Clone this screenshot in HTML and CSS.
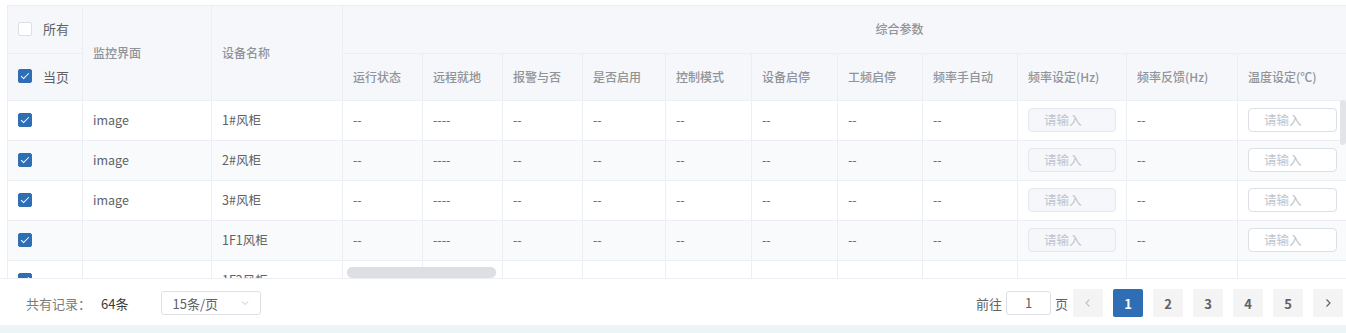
FILE: index.html
```html
<!DOCTYPE html>
<html lang="zh-CN">
<head>
    <meta charset="UTF-8">
    <meta name="viewport" content="width=device-width, initial-scale=1.0">
    <title>设备列表</title>
    <link rel="stylesheet" href="styles.css">
</head>
<body>
    <div class="grid">
        <table class="data">
            <colgroup>
                <col style="width:75px"><col style="width:129px"><col style="width:131px">
                <col style="width:80px"><col style="width:80px"><col style="width:80px">
                <col style="width:83px"><col style="width:86px"><col style="width:86px">
                <col style="width:85px"><col style="width:95px"><col style="width:109px">
                <col style="width:111px"><col style="width:110px"><col style="width:109px">
            </colgroup>
            <thead>
                <tr class="head-top">
                    <th class="sel"><label class="check"><span class="box"></span>所有</label></th>
                    <th rowspan="2">监控界面</th>
                    <th rowspan="2">设备名称</th>
                    <th colspan="12" class="group">综合参数</th>
                </tr>
                <tr class="head-sub">
                    <th class="sel"><label class="check"><span class="box on"></span>当页</label></th>
                    <th>运行状态</th>
                    <th>远程就地</th>
                    <th>报警与否</th>
                    <th>是否启用</th>
                    <th>控制模式</th>
                    <th>设备启停</th>
                    <th>工频启停</th>
                    <th>频率手自动</th>
                    <th>频率设定(Hz)</th>
                    <th>频率反馈(Hz)</th>
                    <th>温度设定(℃)</th>
                    <th></th>
                </tr>
            </thead>
            <tbody>
                <tr>
                    <td class="sel"><span class="box on"></span></td>
                    <td>image</td>
                    <td>1#风柜</td>
                    <td>--</td><td>----</td><td>--</td><td>--</td><td>--</td><td>--</td><td>--</td><td>--</td>
                    <td><span class="field disabled">请输入</span></td>
                    <td>--</td>
                    <td><span class="field">请输入</span></td>
                    <td></td>
                </tr>
                <tr class="stripe">
                    <td class="sel"><span class="box on"></span></td>
                    <td>image</td>
                    <td>2#风柜</td>
                    <td>--</td><td>----</td><td>--</td><td>--</td><td>--</td><td>--</td><td>--</td><td>--</td>
                    <td><span class="field disabled">请输入</span></td>
                    <td>--</td>
                    <td><span class="field">请输入</span></td>
                    <td></td>
                </tr>
                <tr>
                    <td class="sel"><span class="box on"></span></td>
                    <td>image</td>
                    <td>3#风柜</td>
                    <td>--</td><td>----</td><td>--</td><td>--</td><td>--</td><td>--</td><td>--</td><td>--</td>
                    <td><span class="field disabled">请输入</span></td>
                    <td>--</td>
                    <td><span class="field">请输入</span></td>
                    <td></td>
                </tr>
                <tr class="stripe">
                    <td class="sel"><span class="box on"></span></td>
                    <td></td>
                    <td>1F1风柜</td>
                    <td>--</td><td>----</td><td>--</td><td>--</td><td>--</td><td>--</td><td>--</td><td>--</td>
                    <td><span class="field disabled">请输入</span></td>
                    <td>--</td>
                    <td><span class="field">请输入</span></td>
                    <td></td>
                </tr>
                <tr>
                    <td class="sel"><span class="box on"></span></td>
                    <td></td>
                    <td>1F2风柜</td>
                    <td></td><td></td><td></td><td></td><td></td><td></td><td></td><td></td>
                    <td></td><td></td><td></td><td></td>
                </tr>
            </tbody>
        </table>
        <div class="vscroll"></div>
        <div class="hscroll"></div>
    </div>

    <footer class="pager">
        <div class="total">
            <span class="muted">共有记录：</span><span class="count">64条</span>
            <span class="size">15条/页
                <svg class="chev" width="10" height="10" viewBox="0 0 10 10"><path d="M2 3.5 L5 6.5 L8 3.5" fill="none" stroke="#c0c4cc" stroke-width="1"/></svg>
            </span>
        </div>
        <div class="pages">
            <span class="jump">前往 <span class="jump-box">1</span> 页</span>
            <span class="btn nav dim">
                <svg width="10" height="10" viewBox="0 0 10 10"><path d="M6.5 1.5 L3 5 L6.5 8.5" fill="none" stroke="#c0c4cc" stroke-width="1.2"/></svg>
            </span>
            <span class="btn active">1</span>
            <span class="btn">2</span>
            <span class="btn">3</span>
            <span class="btn">4</span>
            <span class="btn">5</span>
            <span class="btn nav">
                <svg width="10" height="10" viewBox="0 0 10 10"><path d="M3.5 1.5 L7 5 L3.5 8.5" fill="none" stroke="#606266" stroke-width="1.2"/></svg>
            </span>
        </div>
    </footer>
    <div class="bottom-bar"></div>
</body>
</html>
```

FILE: styles.css
```css
:root {
    --line: #ebeef5;
    --head: #f5f7fa;
    --text: #606266;
    --muted: #909399;
    --blue: #2f6db5;
}

* {
    margin: 0;
    padding: 0;
    box-sizing: border-box;
}

body {
    background: #ffffff;
    color: var(--text);
    font-family: "Noto Sans CJK SC", "Noto Sans", sans-serif;
    font-size: 12px;
    width: 1346px;
    height: 333px;
    overflow: hidden;
}

.grid {
    position: relative;
    margin: 5px 0 0 7px;
    height: 273px;
    overflow: hidden;
}

.data {
    border-collapse: collapse;
    table-layout: fixed;
    width: 1449px;
}

.data th,
.data td {
    border: 1px solid var(--line);
    padding: 0 10px 2px;
    text-align: left;
    white-space: nowrap;
    overflow: hidden;
}

.data th {
    background: var(--head);
    color: var(--muted);
    font-weight: 500;
    font-size: 12px;
}

.head-top {
    height: 48px;
}

.head-sub {
    height: 47px;
}

.data th.group {
    text-align: center;
}

.data tbody tr {
    height: 40px;
}

.data td {
    font-size: 12.5px;
    color: var(--text);
}

.data tr.stripe td {
    background: #f9fafc;
}

.data td.sel .box {
    display: block;
}

.check {
    display: flex;
    align-items: center;
    gap: 11px;
    color: var(--text);
    font-size: 13px;
    font-weight: 400;
}

.box {
    display: inline-block;
    width: 14px;
    height: 14px;
    border: 1px solid #dcdfe6;
    border-radius: 2px;
    background: #ffffff;
    position: relative;
}

.box.on {
    background: var(--blue);
    border-color: var(--blue);
}

.box.on::after {
    content: '';
    position: absolute;
    left: 4px;
    top: 1px;
    width: 3px;
    height: 7px;
    border: 1px solid #ffffff;
    border-left: 0;
    border-top: 0;
    transform: rotate(45deg);
}

.field {
    display: block;
    height: 24px;
    line-height: 22px;
    border: 1px solid #dcdfe6;
    border-radius: 4px;
    padding-left: 15px;
    color: #c0c4cc;
    background: #ffffff;
    font-size: 12.5px;
}

.field.disabled {
    background: var(--head);
    border-color: #e4e7ed;
}

.vscroll {
    position: absolute;
    right: 0;
    top: 95px;
    width: 6px;
    height: 45px;
    border-radius: 3px;
    background: #e3e4e9;
}

.hscroll {
    position: absolute;
    left: 340px;
    top: 262px;
    width: 149px;
    height: 11px;
    border-radius: 5px;
    background: #dedfe4;
}

.pager {
    height: 47px;
    border-top: 1px solid var(--line);
    display: flex;
    align-items: center;
    justify-content: space-between;
    padding: 2px 3px 0 26px;
    font-size: 13px;
}

.total {
    display: flex;
    align-items: center;
}

.muted {
    color: #7a7c80;
}

.count {
    color: #3a3b3e;
    margin-left: 10px;
}

.size {
    display: flex;
    align-items: center;
    justify-content: space-between;
    width: 100px;
    height: 24px;
    margin-left: 33px;
    padding: 0 10px;
    border: 1px solid #dcdfe6;
    border-radius: 3px;
    color: var(--text);
}

.pages {
    display: flex;
    align-items: center;
    gap: 10px;
}

.jump {
    display: flex;
    align-items: center;
    gap: 4px;
    margin-right: -5px;
}

.jump-box {
    width: 45px;
    height: 24px;
    border: 1px solid #dcdfe6;
    border-radius: 3px;
    text-align: center;
    line-height: 22px;
}

.btn {
    width: 30px;
    height: 28px;
    border-radius: 2px;
    background: #f4f4f5;
    color: var(--text);
    font-weight: 700;
    display: flex;
    align-items: center;
    justify-content: center;
}

.btn.active {
    background: var(--blue);
    color: #ffffff;
}

.bottom-bar {
    height: 8px;
    background: #edf4f8;
}
```
